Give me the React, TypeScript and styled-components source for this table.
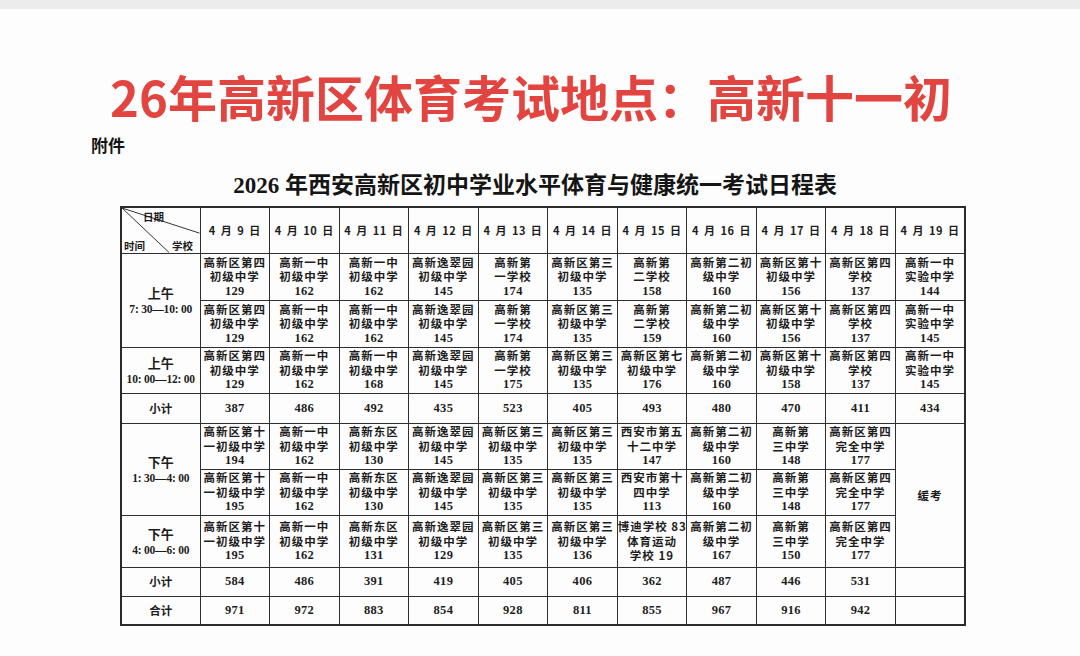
import React from "react";
import styled, { createGlobalStyle } from "styled-components";

const GlobalStyle = createGlobalStyle`
  html, body {
    margin: 0;
    padding: 0;
    background: #ffffff;
  }
  body {
    width: 1080px;
    height: 656px;
    overflow: hidden;
    font-family: "Noto Sans CJK SC", "Liberation Sans", sans-serif;
    color: #1b1b1b;
  }
`;

const Page = styled.div`
  display: flex;
  flex-direction: column;
  width: 1080px;
  height: 656px;
  background: #fdfdfd;
`;

const TopBar = styled.div`
  height: 9px;
  background: #ececec;
  flex-shrink: 0;
`;

const Title = styled.h1`
  margin: 59px 0 0;
  padding-right: 18px;
  text-align: center;
  font-family: "Noto Sans CJK SC", "Liberation Sans", sans-serif;
  font-weight: 700;
  font-size: 49px;
  line-height: 56px;
  color: #e2443f;
`;

const Attachment = styled.div`
  margin: 10px 0 0 91px;
  font-size: 17px;
  line-height: 22px;
  font-weight: 700;
  color: #151515;
`;

const Subtitle = styled.h2`
  margin: 16px 0 0;
  padding-right: 10px;
  text-align: center;
  font-family: "Liberation Serif", "Noto Sans CJK SC", serif;
  font-weight: 700;
  font-size: 23px;
  line-height: 28px;
  color: #151515;
`;

const Table = styled.table`
  margin: 6px 0 0 120px;
  width: 846px;
  table-layout: fixed;
  border-collapse: collapse;
  border: 2px solid #2b2b2b;
`;

const Row = styled.tr<{ $h: number }>`
  height: ${(p) => p.$h}px;
`;

const Cell = styled.td`
  border: 1px solid #2f2f2f;
  padding: 0;
  text-align: center;
  vertical-align: middle;
  font-family: "Noto Sans CJK SC", sans-serif;
  font-weight: 700;
  font-size: 11.5px;
  line-height: 14.5px;
  letter-spacing: 1px;
  color: #1d1d1d;
`;

const DateCell = styled(Cell)`
  font-size: 11px;
  letter-spacing: 0.5px;
  word-spacing: 2px;
`;

const Num = styled.span`
  display: block;
  font-family: "Liberation Serif", serif;
  font-weight: 700;
  font-size: 12.5px;
  letter-spacing: 0.3px;
`;

const Line = styled.span`
  display: block;
  white-space: nowrap;
`;

const SumCell = styled(Cell)`
  font-family: "Liberation Serif", serif;
  font-size: 12.5px;
  letter-spacing: 0.3px;
`;

const LabelCell = styled(Cell)`
  letter-spacing: 0;
`;

const LabelTop = styled.span`
  display: block;
  font-size: 13px;
  line-height: 17px;
`;

const LabelTime = styled.span`
  display: block;
  font-family: "Liberation Serif", "Noto Sans CJK SC", serif;
  font-size: 11.5px;
  line-height: 16px;
  letter-spacing: -0.2px;
  white-space: nowrap;
`;

const CornerCell = styled(Cell)`
  position: relative;
`;

const CornerLines = styled.svg`
  position: absolute;
  inset: 0;
  width: 100%;
  height: 100%;
`;

const CornerText = styled.span<{ $x: number; $y: number }>`
  position: absolute;
  left: ${(p) => p.$x}px;
  top: ${(p) => p.$y}px;
  font-size: 10.5px;
  line-height: 12px;
  letter-spacing: 0;
`;

type Slot = { lines: string[] };

const dates = ["9", "10", "11", "12", "13", "14", "15", "16", "17", "18", "19"];

const s = (a: string, b: string, n: string): Slot => ({ lines: [a, b, n] });

const r1: Slot[] = [
  s("高新区第四", "初级中学", "129"),
  s("高新一中", "初级中学", "162"),
  s("高新一中", "初级中学", "162"),
  s("高新逸翠园", "初级中学", "145"),
  s("高新第", "一学校", "174"),
  s("高新区第三", "初级中学", "135"),
  s("高新第", "二学校", "158"),
  s("高新第二初", "级中学", "160"),
  s("高新区第十", "初级中学", "156"),
  s("高新区第四", "学校", "137"),
  s("高新一中", "实验中学", "144"),
];

const r2: Slot[] = [
  s("高新区第四", "初级中学", "129"),
  s("高新一中", "初级中学", "162"),
  s("高新一中", "初级中学", "162"),
  s("高新逸翠园", "初级中学", "145"),
  s("高新第", "一学校", "174"),
  s("高新区第三", "初级中学", "135"),
  s("高新第", "二学校", "159"),
  s("高新第二初", "级中学", "160"),
  s("高新区第十", "初级中学", "156"),
  s("高新区第四", "学校", "137"),
  s("高新一中", "实验中学", "145"),
];

const r3: Slot[] = [
  s("高新区第四", "初级中学", "129"),
  s("高新一中", "初级中学", "162"),
  s("高新一中", "初级中学", "168"),
  s("高新逸翠园", "初级中学", "145"),
  s("高新第", "一学校", "175"),
  s("高新区第三", "初级中学", "135"),
  s("高新区第七", "初级中学", "176"),
  s("高新第二初", "级中学", "160"),
  s("高新区第十", "初级中学", "158"),
  s("高新区第四", "学校", "137"),
  s("高新一中", "实验中学", "145"),
];

const r5: Slot[] = [
  s("高新区第十", "一初级中学", "194"),
  s("高新一中", "初级中学", "162"),
  s("高新东区", "初级中学", "130"),
  s("高新逸翠园", "初级中学", "145"),
  s("高新区第三", "初级中学", "135"),
  s("高新区第三", "初级中学", "135"),
  s("西安市第五", "十二中学", "147"),
  s("高新第二初", "级中学", "160"),
  s("高新第", "三中学", "148"),
  s("高新区第四", "完全中学", "177"),
];

const r6: Slot[] = [
  s("高新区第十", "一初级中学", "195"),
  s("高新一中", "初级中学", "162"),
  s("高新东区", "初级中学", "130"),
  s("高新逸翠园", "初级中学", "145"),
  s("高新区第三", "初级中学", "135"),
  s("高新区第三", "初级中学", "135"),
  s("西安市第十", "四中学", "113"),
  s("高新第二初", "级中学", "160"),
  s("高新第", "三中学", "148"),
  s("高新区第四", "完全中学", "177"),
];

const r7: Slot[] = [
  s("高新区第十", "一初级中学", "195"),
  s("高新一中", "初级中学", "162"),
  s("高新东区", "初级中学", "131"),
  s("高新逸翠园", "初级中学", "129"),
  s("高新区第三", "初级中学", "135"),
  s("高新区第三", "初级中学", "136"),
  { lines: ["博迪学校 83", "体育运动", "学校 19"] },
  s("高新第二初", "级中学", "167"),
  s("高新第", "三中学", "150"),
  s("高新区第四", "完全中学", "177"),
];

const am = ["387", "486", "492", "435", "523", "405", "493", "480", "470", "411", "434"];
const pm = ["584", "486", "391", "419", "405", "406", "362", "487", "446", "531", ""];
const total = ["971", "972", "883", "854", "928", "811", "855", "967", "916", "942", ""];

function SlotCell({ slot }: { slot: Slot }) {
  return (
    <Cell>
      {slot.lines.map((l, i) =>
        /^\d+$/.test(l) ? <Num key={i}>{l}</Num> : <Line key={i}>{l}</Line>
      )}
    </Cell>
  );
}

function Label({ top, time, rows }: { top: string; time: string; rows?: number }) {
  return (
    <LabelCell rowSpan={rows}>
      <LabelTop>{top}</LabelTop>
      <LabelTime>{time}</LabelTime>
    </LabelCell>
  );
}

export default function App() {
  return (
    <>
      <GlobalStyle />
      <Page>
        <TopBar />
        <Title>26年高新区体育考试地点：高新十一初</Title>
        <Attachment>附件</Attachment>
        <Subtitle>2026 年西安高新区初中学业水平体育与健康统一考试日程表</Subtitle>
        <Table>
          <colgroup>
            <col style={{ width: 79 }} />
            {dates.map((d) => (
              <col key={d} />
            ))}
          </colgroup>
          <tbody>
            <Row $h={46}>
              <CornerCell>
                <CornerLines viewBox="0 0 79 46" preserveAspectRatio="none">
                  <line x1="0" y1="0" x2="79" y2="26" stroke="#2f2f2f" strokeWidth="1" />
                  <line x1="0" y1="0" x2="48" y2="46" stroke="#2f2f2f" strokeWidth="1" />
                </CornerLines>
                <CornerText $x={21} $y={3}>日期</CornerText>
                <CornerText $x={2} $y={32}>时间</CornerText>
                <CornerText $x={50} $y={32}>学校</CornerText>
              </CornerCell>
              {dates.map((d) => (
                <DateCell key={d}>{`4 月 ${d} 日`}</DateCell>
              ))}
            </Row>
            <Row $h={47}>
              <Label top="上午" time="7: 30—10: 00" rows={2} />
              {r1.map((c, i) => (
                <SlotCell key={i} slot={c} />
              ))}
            </Row>
            <Row $h={47}>
              {r2.map((c, i) => (
                <SlotCell key={i} slot={c} />
              ))}
            </Row>
            <Row $h={46}>
              <Label top="上午" time="10: 00—12: 00" />
              {r3.map((c, i) => (
                <SlotCell key={i} slot={c} />
              ))}
            </Row>
            <Row $h={30}>
              <LabelCell>小计</LabelCell>
              {am.map((v, i) => (
                <SumCell key={i}>{v}</SumCell>
              ))}
            </Row>
            <Row $h={46}>
              <Label top="下午" time="1: 30—4: 00" rows={2} />
              {r5.map((c, i) => (
                <SlotCell key={i} slot={c} />
              ))}
              <Cell rowSpan={3}>缓考</Cell>
            </Row>
            <Row $h={46}>
              {r6.map((c, i) => (
                <SlotCell key={i} slot={c} />
              ))}
            </Row>
            <Row $h={52}>
              <Label top="下午" time="4: 00—6: 00" />
              {r7.map((c, i) => (
                <SlotCell key={i} slot={c} />
              ))}
            </Row>
            <Row $h={29}>
              <LabelCell>小计</LabelCell>
              {pm.map((v, i) => (
                <SumCell key={i}>{v}</SumCell>
              ))}
            </Row>
            <Row $h={29}>
              <LabelCell>合计</LabelCell>
              {total.map((v, i) => (
                <SumCell key={i}>{v}</SumCell>
              ))}
            </Row>
          </tbody>
        </Table>
      </Page>
    </>
  );
}
